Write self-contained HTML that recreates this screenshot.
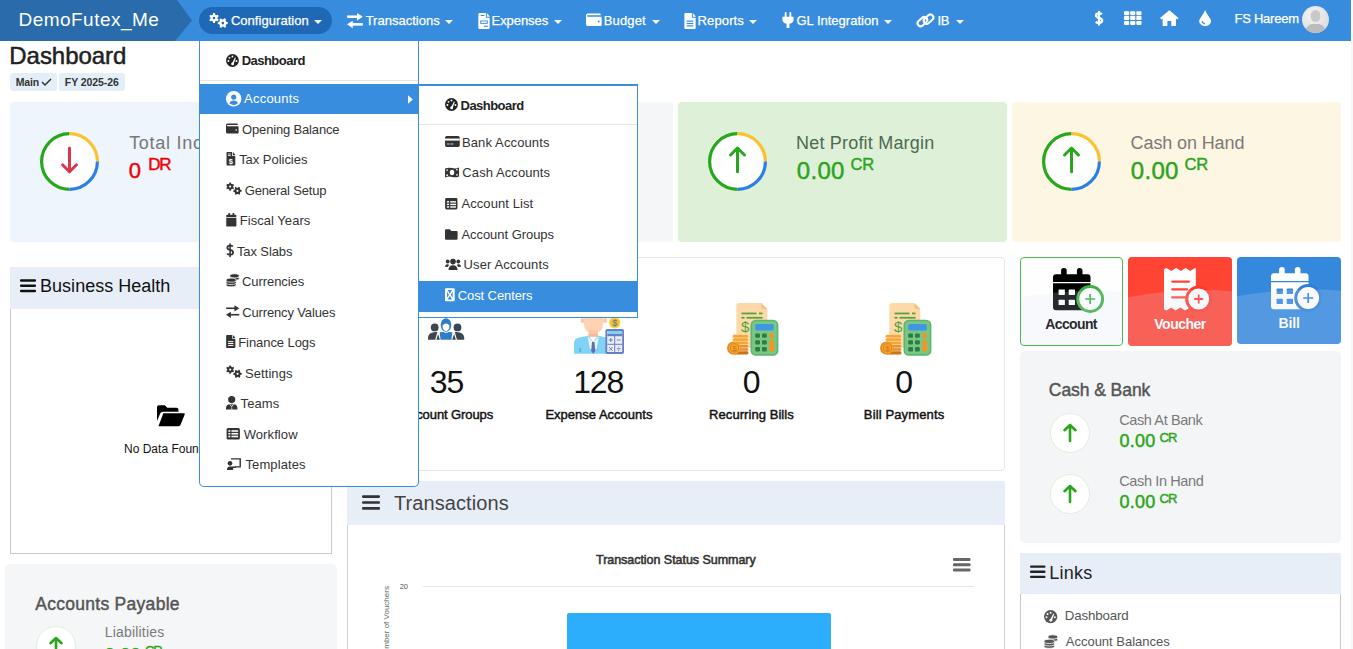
<!DOCTYPE html>
<html><head><meta charset="utf-8"><style>
*{box-sizing:border-box;margin:0;padding:0}
html,body{width:1353px;height:649px;overflow:hidden;background:#fff;font-family:"Liberation Sans",sans-serif;color:#222}
.a{position:absolute}
.t{position:absolute;white-space:nowrap;line-height:1;font-family:"Liberation Sans",sans-serif}
.ic{position:absolute;overflow:visible}
</style></head><body>
<div class="a" style="left:1351px;top:0;width:2px;height:649px;background:#f8f8f8"></div>
<div class="t" style="left:9.33px;top:43.68px;font-size:24px;color:#222;-webkit-text-stroke:0.5px #222;letter-spacing:-0.047px;">Dashboard</div>
<div class="a" style="left:10px;top:73px;width:47px;height:18px;background:#e3eef9;border-radius:3px"></div>
<div class="a" style="left:59px;top:73px;width:66px;height:18px;background:#e3eef9;border-radius:3px"></div>
<div class="t" style="left:15.82px;top:76.61px;font-size:10.5px;color:#333;font-weight:bold;letter-spacing:-0.192px;">Main</div>
<svg class="ic" style="left:41px;top:78px;" width="11" height="8" viewBox="0 0 11 8"><path d="M1,4 L4,7 L10,1" stroke="#333" stroke-width="1.5" fill="none"/></svg>
<div class="t" style="left:64.82px;top:76.61px;font-size:10.5px;color:#333;font-weight:bold;letter-spacing:-0.067px;">FY 2025-26</div>
<div class="a" style="left:10px;top:102px;width:329px;height:140px;background:#eef5fd;border-radius:4px"></div>
<svg class="ic" style="left:40px;top:132px;" width="59" height="59" viewBox="0 0 59 59"><circle cx="29.5" cy="29.5" r="27.9" fill="#fff"/><path d="M29.50,57.40 A27.9,27.9 0 0 1 29.50,1.60" stroke="#26a71c" stroke-width="3.2" fill="none"/><path d="M29.50,1.60 A27.9,27.9 0 0 1 57.40,29.50" stroke="#fbc22e" stroke-width="3.2" fill="none"/><path d="M57.40,29.50 A27.9,27.9 0 0 1 29.50,57.40" stroke="#2d7fe8" stroke-width="3.2" fill="none"/><path d="M29.5,16.0 V39.8 M22.5,32.8 L29.5,39.8 L36.5,32.8" stroke="#d9384a" stroke-width="3" stroke-linecap="round" stroke-linejoin="round" fill="none"/></svg>
<div class="t" style="left:129.14px;top:133.76px;font-size:18px;color:#777;letter-spacing:0.737px;">Total Income</div>
<div class="t" style="left:128.84px;top:159.88px;font-size:22px;color:#f00000;-webkit-text-stroke:0.45px #f00000;">0</div>
<div class="t" style="left:148.17px;top:155.81px;font-size:17px;color:#f00000;-webkit-text-stroke:0.45px #f00000;letter-spacing:-1.305px;">DR</div>
<div class="a" style="left:344px;top:102px;width:329px;height:140px;background:#f5f6f8;border-radius:4px"></div>
<svg class="ic" style="left:374px;top:132px;" width="59" height="59" viewBox="0 0 59 59"><circle cx="29.5" cy="29.5" r="27.9" fill="#fff"/><path d="M29.50,57.40 A27.9,27.9 0 0 1 29.50,1.60" stroke="#26a71c" stroke-width="3.2" fill="none"/><path d="M29.50,1.60 A27.9,27.9 0 0 1 57.40,29.50" stroke="#fbc22e" stroke-width="3.2" fill="none"/><path d="M57.40,29.50 A27.9,27.9 0 0 1 29.50,57.40" stroke="#2d7fe8" stroke-width="3.2" fill="none"/><path d="M29.5,16.0 V39.8 M22.5,32.8 L29.5,39.8 L36.5,32.8" stroke="#d9384a" stroke-width="3" stroke-linecap="round" stroke-linejoin="round" fill="none"/></svg>
<div class="t" style="left:463.14px;top:133.76px;font-size:18px;color:#777;letter-spacing:0.511px;">Total Expense</div>
<div class="t" style="left:462.85px;top:159.88px;font-size:22px;color:#f00000;-webkit-text-stroke:0.45px #f00000;">0</div>
<div class="t" style="left:482.17px;top:155.81px;font-size:17px;color:#f00000;-webkit-text-stroke:0.45px #f00000;letter-spacing:-1.305px;">DR</div>
<div class="a" style="left:678px;top:102px;width:329px;height:140px;background:#dff0d8;border-radius:4px"></div>
<svg class="ic" style="left:708px;top:132px;" width="59" height="59" viewBox="0 0 59 59"><circle cx="29.5" cy="29.5" r="27.9" fill="#fff"/><path d="M29.50,57.40 A27.9,27.9 0 0 1 29.50,1.60" stroke="#26a71c" stroke-width="3.2" fill="none"/><path d="M29.50,1.60 A27.9,27.9 0 0 1 57.40,29.50" stroke="#fbc22e" stroke-width="3.2" fill="none"/><path d="M57.40,29.50 A27.9,27.9 0 0 1 29.50,57.40" stroke="#2d7fe8" stroke-width="3.2" fill="none"/><path d="M29.5,39.8 V16.0 M22.5,23.0 L29.5,16.0 L36.5,23.0" stroke="#2aa51e" stroke-width="3" stroke-linecap="round" stroke-linejoin="round" fill="none"/></svg>
<div class="t" style="left:796.06px;top:133.76px;font-size:18px;color:#4d6a52;letter-spacing:0.194px;">Net Profit Margin</div>
<div class="t" style="left:796.76px;top:158.68px;font-size:24px;color:#2aa51a;-webkit-text-stroke:0.45px #2aa51a;letter-spacing:0.323px;">0.00</div>
<div class="t" style="left:850.40px;top:156.03px;font-size:16.5px;color:#2aa51a;-webkit-text-stroke:0.45px #2aa51a;letter-spacing:-0.043px;">CR</div>
<div class="a" style="left:1012px;top:102px;width:329px;height:140px;background:#fdf6e3;border-radius:4px"></div>
<svg class="ic" style="left:1042px;top:132px;" width="59" height="59" viewBox="0 0 59 59"><circle cx="29.5" cy="29.5" r="27.9" fill="#fff"/><path d="M29.50,57.40 A27.9,27.9 0 0 1 29.50,1.60" stroke="#26a71c" stroke-width="3.2" fill="none"/><path d="M29.50,1.60 A27.9,27.9 0 0 1 57.40,29.50" stroke="#fbc22e" stroke-width="3.2" fill="none"/><path d="M57.40,29.50 A27.9,27.9 0 0 1 29.50,57.40" stroke="#2d7fe8" stroke-width="3.2" fill="none"/><path d="M29.5,39.8 V16.0 M22.5,23.0 L29.5,16.0 L36.5,23.0" stroke="#2aa51e" stroke-width="3" stroke-linecap="round" stroke-linejoin="round" fill="none"/></svg>
<div class="t" style="left:1130.60px;top:133.76px;font-size:18px;color:#7a7a7a;letter-spacing:-0.114px;">Cash on Hand</div>
<div class="t" style="left:1130.77px;top:158.68px;font-size:24px;color:#2aa51a;-webkit-text-stroke:0.45px #2aa51a;letter-spacing:0.323px;">0.00</div>
<div class="t" style="left:1184.40px;top:156.03px;font-size:16.5px;color:#2aa51a;-webkit-text-stroke:0.45px #2aa51a;letter-spacing:-0.043px;">CR</div>
<div class="a" style="left:10px;top:267px;width:322px;height:42px;background:#e7eef8"></div>
<div class="a" style="left:10px;top:309px;width:322px;height:245px;border:1px solid #c8c8c8;border-top:none"></div>
<svg class="ic" style="left:20px;top:279px;" width="16" height="13.5" viewBox="0 0 16 13"><rect x="0" y="0" width="16" height="2.4" rx="1" fill="#111"/><rect x="0" y="5.3" width="16" height="2.4" rx="1" fill="#111"/><rect x="0" y="10.6" width="16" height="2.4" rx="1" fill="#111"/></svg>
<div class="t" style="left:40.06px;top:277.46px;font-size:18px;color:#111;letter-spacing:0.019px;">Business Health</div>
<svg class="ic" style="left:156.7px;top:405.4px;" width="28.3" height="22.2" viewBox="0 0 29 22"><path fill="#000" d="M0,2 Q0,0 2,0 H8 L10.5,2.5 H20 Q22,2.5 22,4.5 V6.5 H6 Q4.2,6.5 3.4,8.2 L0,16Z"/><path fill="#000" d="M6.5,8 H27.5 Q29,8 28.3,9.5 L24,20 Q23.3,21.5 21.5,21.5 H1.5Z"/></svg>
<div class="t" style="left:124.04px;top:442.64px;font-size:12px;color:#111;">No Data Found</div>
<div class="a" style="left:5px;top:564px;width:332px;height:120px;background:#f5f6f8;border-radius:5px"></div>
<div class="t" style="left:35.23px;top:596.19px;font-size:17.5px;color:#555;-webkit-text-stroke:0.45px #555;letter-spacing:0.283px;">Accounts Payable</div>
<svg class="ic" style="left:35.5px;top:626px;" width="40" height="40" viewBox="0 0 40 40"><circle cx="20.0" cy="20.0" r="19.5" fill="#fff" stroke="#e0efdb" stroke-width="1"/><path d="M20.0,28.0 V12.0 M14.5,17.2 L20.0,12.0 L25.5,17.2" stroke="#2aa51e" stroke-width="2.6" stroke-linecap="round" stroke-linejoin="round" fill="none"/></svg>
<div class="t" style="left:104.68px;top:625.45px;font-size:14px;color:#7a7a7a;letter-spacing:0.190px;">Liabilities</div>
<div class="t" style="left:104.80px;top:645.76px;font-size:18px;color:#2aa515;-webkit-text-stroke:0.45px #2aa515;letter-spacing:0.230px;">0.00</div>
<div class="t" style="left:144.88px;top:644.00px;font-size:13px;color:#2aa515;-webkit-text-stroke:0.45px #2aa515;letter-spacing:-0.935px;">CR</div>
<div class="a" style="left:348px;top:257px;width:657px;height:214px;border:1px solid #e6e6e6;border-radius:4px"></div>
<div class="t" style="left:429.72px;top:366.11px;font-size:32px;color:#111;letter-spacing:-0.960px;">35</div>
<div class="t" style="left:401.23px;top:407.80px;font-size:13px;color:#111;-webkit-text-stroke:0.45px #111;letter-spacing:-0.093px;">Account Groups</div>
<div class="t" style="left:573.20px;top:366.11px;font-size:32px;color:#111;letter-spacing:-1.200px;">128</div>
<div class="t" style="left:545.38px;top:407.80px;font-size:13px;color:#111;-webkit-text-stroke:0.45px #111;letter-spacing:0.004px;">Expense Accounts</div>
<div class="t" style="left:742.77px;top:366.11px;font-size:32px;color:#111;">0</div>
<div class="t" style="left:709.09px;top:407.80px;font-size:13px;color:#111;-webkit-text-stroke:0.45px #111;letter-spacing:0.061px;">Recurring Bills</div>
<div class="t" style="left:895.37px;top:366.11px;font-size:32px;color:#111;">0</div>
<div class="t" style="left:863.83px;top:407.80px;font-size:13px;color:#111;-webkit-text-stroke:0.45px #111;letter-spacing:0.130px;">Bill Payments</div>
<svg class="ic" style="left:428px;top:318px;" width="36.2" height="22" viewBox="0 0 36.2 22"><circle cx="6.7" cy="9.4" r="3.9" fill="#3b4650"/><circle cx="29.5" cy="9.4" r="3.9" fill="#3b4650"/><path fill="#3b4650" d="M0,21.7 V19.5 Q0.5,14.2 7.5,13.9 L9.4,13.9 L7.2,21.7Z"/><path fill="#3b4650" d="M36.2,21.7 V19.5 Q35.7,14.2 28.7,13.9 L26.8,13.9 L29,21.7Z"/><path fill="#3b4650" d="M8.3,21.7 L10.1,16 L11.9,21.7Z"/><path fill="#3b4650" d="M27.9,21.7 L26.1,16 L24.3,21.7Z"/><ellipse cx="18" cy="7" rx="5.35" ry="6.65" fill="#2f7cc9"/><path fill="#fff" d="M14.5,7.5 Q16,5.6 18,5.6 Q20,5.6 21.5,7.5 Q21.5,12 18,13.3 Q14.5,12 14.5,7.5Z"/><path fill="#2f7cc9" d="M11.6,14.3 L15.5,13.9 Q18,15.6 20.5,13.9 L24.4,14.3 L23.4,21.7 H12.6Z"/></svg>
<svg class="ic" style="left:572px;top:302px;" width="52" height="52" viewBox="0 0 52 52"><ellipse cx="10.5" cy="18.5" rx="2" ry="2.6" fill="#fdc9a4"/><ellipse cx="33" cy="18.5" rx="2" ry="2.6" fill="#fdc9a4"/><path fill="#fdd3b3" d="M12,6 H31 V22 Q31,31 21.5,31 Q12,31 12,22Z"/><rect x="16.6" y="28" width="9.2" height="7" fill="#fdc9a4"/><path fill="#f8b48e" d="M16.6,31 Q21.2,34 25.8,31 V33 Q21.2,35.5 16.6,33Z"/><path fill="#80d2f6" d="M2,51.7 V41 Q2,36 8,35.5 L16.6,33.5 L21.2,40 L25.8,33.5 L34,35.5 V51.7Z"/><path fill="#eef3f7" d="M15.5,34 L21.2,40.5 L27,34 L24.5,47 H18Z"/><path fill="#5a6eb0" d="M20,40 H22.5 L23.2,49 L21.2,51.7 L19.2,49Z"/><rect x="7.5" y="46" width="1.3" height="4" fill="#3bb0e0"/><circle cx="42.7" cy="20.7" r="5.7" fill="#f9d13c"/><circle cx="42.7" cy="20.7" r="4.3" fill="#f6c21e"/><text x="42.7" y="24" font-size="9" text-anchor="middle" fill="#5a6eb0" font-family="Liberation Sans">$</text><rect x="34.3" y="28" width="16.8" height="23" rx="0.8" fill="#e9edf6" stroke="#6b7ebf" stroke-width="1.8"/><rect x="35.3" y="29" width="14.8" height="3" fill="#7fd3f7"/><rect x="35.3" y="32" width="14.8" height="2.2" fill="#6b7ebf"/><rect x="42.2" y="34" width="1" height="16" fill="#6b7ebf"/><rect x="35.3" y="41.8" width="14.8" height="1" fill="#6b7ebf"/><path d="M36.8,38 H40.8 M38.8,36 V40 M44.8,38 H48.6 M37,45 L40.6,48.6 M40.6,45 L37,48.6 M44.8,46.8 H48.6" stroke="#6b7ebf" stroke-width="1"/><circle cx="46.7" cy="45" r="0.55" fill="#6b7ebf"/><circle cx="46.7" cy="48.6" r="0.55" fill="#6b7ebf"/></svg>
<svg class="ic" style="left:726px;top:303px;" width="52" height="52" viewBox="0 0 52 52"><path fill="#fdd9aa" d="M13.3,0 H35.3 L41.3,6 V42 Q41.3,45 38.3,45 H13.3 Q10.3,45 10.3,42 V3 Q10.3,0 13.3,0Z"/><path fill="#f8c07a" d="M35.3,0 L41.3,6 H37.3 Q35.3,6 35.3,4Z"/><rect x="15.5" y="9.6" width="15" height="1.7" fill="#4fa437"/><rect x="33" y="9.6" width="3.5" height="1.7" fill="#4fa437"/><rect x="15.5" y="13.9" width="3" height="1.7" fill="#4fa437"/><rect x="20.5" y="13.9" width="16" height="1.7" fill="#4fa437"/><text x="19.2" y="29" font-size="15" text-anchor="middle" fill="#4fa437" font-family="Liberation Sans">$</text><rect x="6.4" y="31.6" width="16.3" height="3.6" rx="1.8" fill="#f7a530" stroke="#fff" stroke-width="0.4"/><rect x="6.4" y="34.9" width="16.3" height="3.6" rx="1.8" fill="#f7a530" stroke="#fff" stroke-width="0.4"/><rect x="6.4" y="38.2" width="16.3" height="3.6" rx="1.8" fill="#f7a530" stroke="#fff" stroke-width="0.4"/><rect x="6.4" y="41.5" width="16.3" height="3.6" rx="1.8" fill="#e8902a" stroke="#fff" stroke-width="0.4"/><rect x="6.4" y="44.8" width="16.3" height="3.6" rx="1.8" fill="#e8902a" stroke="#fff" stroke-width="0.4"/><rect x="6.4" y="48.1" width="16.3" height="3.6" rx="1.8" fill="#c9741a" stroke="#fff" stroke-width="0.4"/><circle cx="7.6" cy="45" r="6.6" fill="#e58b22"/><circle cx="8.6" cy="44.8" r="5.8" fill="#f6a52e"/><circle cx="8.6" cy="44.8" r="4.1" fill="none" stroke="#d77f1a" stroke-width="0.9"/><text x="8.6" y="47.8" font-size="7.5" text-anchor="middle" fill="#c9741a" font-family="Liberation Sans">$</text><rect x="25.3" y="17.5" width="26.3" height="34.4" rx="4.5" fill="#78c786" stroke="#5cb66b" stroke-width="1.6"/><rect x="29.2" y="21" width="18.6" height="6.5" rx="1.5" fill="#3f96e2"/><rect x="29.2" y="30.4" width="4.8" height="4.4" rx="1" fill="#2e7c3f"/><rect x="29.2" y="37.2" width="4.8" height="4.4" rx="1" fill="#2e7c3f"/><rect x="29.2" y="44" width="4.8" height="4.4" rx="1" fill="#2e7c3f"/><rect x="36" y="30.4" width="4.8" height="4.4" rx="1" fill="#2e7c3f"/><rect x="36" y="37.2" width="4.8" height="4.4" rx="1" fill="#2e7c3f"/><rect x="36" y="44" width="4.8" height="4.4" rx="1" fill="#2e7c3f"/><rect x="43.4" y="30.4" width="4.6" height="4.4" rx="1" fill="#f7941d"/><rect x="43.4" y="37.2" width="4.6" height="11.2" rx="1" fill="#f7941d"/></svg>
<svg class="ic" style="left:878.6px;top:303px;" width="52" height="52" viewBox="0 0 52 52"><path fill="#fdd9aa" d="M13.3,0 H35.3 L41.3,6 V42 Q41.3,45 38.3,45 H13.3 Q10.3,45 10.3,42 V3 Q10.3,0 13.3,0Z"/><path fill="#f8c07a" d="M35.3,0 L41.3,6 H37.3 Q35.3,6 35.3,4Z"/><rect x="15.5" y="9.6" width="15" height="1.7" fill="#4fa437"/><rect x="33" y="9.6" width="3.5" height="1.7" fill="#4fa437"/><rect x="15.5" y="13.9" width="3" height="1.7" fill="#4fa437"/><rect x="20.5" y="13.9" width="16" height="1.7" fill="#4fa437"/><text x="19.2" y="29" font-size="15" text-anchor="middle" fill="#4fa437" font-family="Liberation Sans">$</text><rect x="6.4" y="31.6" width="16.3" height="3.6" rx="1.8" fill="#f7a530" stroke="#fff" stroke-width="0.4"/><rect x="6.4" y="34.9" width="16.3" height="3.6" rx="1.8" fill="#f7a530" stroke="#fff" stroke-width="0.4"/><rect x="6.4" y="38.2" width="16.3" height="3.6" rx="1.8" fill="#f7a530" stroke="#fff" stroke-width="0.4"/><rect x="6.4" y="41.5" width="16.3" height="3.6" rx="1.8" fill="#e8902a" stroke="#fff" stroke-width="0.4"/><rect x="6.4" y="44.8" width="16.3" height="3.6" rx="1.8" fill="#e8902a" stroke="#fff" stroke-width="0.4"/><rect x="6.4" y="48.1" width="16.3" height="3.6" rx="1.8" fill="#c9741a" stroke="#fff" stroke-width="0.4"/><circle cx="7.6" cy="45" r="6.6" fill="#e58b22"/><circle cx="8.6" cy="44.8" r="5.8" fill="#f6a52e"/><circle cx="8.6" cy="44.8" r="4.1" fill="none" stroke="#d77f1a" stroke-width="0.9"/><text x="8.6" y="47.8" font-size="7.5" text-anchor="middle" fill="#c9741a" font-family="Liberation Sans">$</text><rect x="25.3" y="17.5" width="26.3" height="34.4" rx="4.5" fill="#78c786" stroke="#5cb66b" stroke-width="1.6"/><rect x="29.2" y="21" width="18.6" height="6.5" rx="1.5" fill="#3f96e2"/><rect x="29.2" y="30.4" width="4.8" height="4.4" rx="1" fill="#2e7c3f"/><rect x="29.2" y="37.2" width="4.8" height="4.4" rx="1" fill="#2e7c3f"/><rect x="29.2" y="44" width="4.8" height="4.4" rx="1" fill="#2e7c3f"/><rect x="36" y="30.4" width="4.8" height="4.4" rx="1" fill="#2e7c3f"/><rect x="36" y="37.2" width="4.8" height="4.4" rx="1" fill="#2e7c3f"/><rect x="36" y="44" width="4.8" height="4.4" rx="1" fill="#2e7c3f"/><rect x="43.4" y="30.4" width="4.6" height="4.4" rx="1" fill="#f7941d"/><rect x="43.4" y="37.2" width="4.6" height="11.2" rx="1" fill="#f7941d"/></svg>
<div class="a" style="left:347px;top:481px;width:658px;height:44px;background:#e7eef8"></div>
<div class="a" style="left:347px;top:525px;width:658px;height:140px;border:1px solid #d0d0d0;border-top:none"></div>
<svg class="ic" style="left:361.5px;top:495px;" width="18" height="15" viewBox="0 0 16 13"><rect x="0" y="0" width="16" height="2.4" rx="1" fill="#333"/><rect x="0" y="5.3" width="16" height="2.4" rx="1" fill="#333"/><rect x="0" y="10.6" width="16" height="2.4" rx="1" fill="#333"/></svg>
<div class="t" style="left:394.00px;top:492.97px;font-size:20px;color:#444;letter-spacing:0.082px;">Transactions</div>
<div class="t" style="left:596.02px;top:554.42px;font-size:12.5px;color:#333;-webkit-text-stroke:0.55px #333;letter-spacing:-0.040px;">Transaction Status Summary</div>
<svg class="ic" style="left:952.7px;top:558px;" width="17.5" height="13.5" viewBox="0 0 17.5 13.5"><rect y="0" width="17.5" height="2.9" rx="1" fill="#666"/><rect y="5.3" width="17.5" height="2.9" rx="1" fill="#666"/><rect y="10.6" width="17.5" height="2.9" rx="1" fill="#666"/></svg>
<div class="a" style="left:423px;top:585.5px;width:551px;height:1px;background:#e6e6e6"></div>
<div class="t" style="left:399.82px;top:583.45px;font-size:7.5px;color:#555;letter-spacing:-0.287px;">20</div>
<div class="t" style="left:382.6px;top:659.2px;font-size:8px;color:#666;transform:rotate(-90deg);transform-origin:0 0;">Number of Vouchers</div>
<div class="a" style="left:567px;top:613px;width:264px;height:60px;background:#2caefc;border-radius:2px 2px 0 0"></div>
<div class="a" style="left:1020px;top:257px;width:103px;height:89px;border:1px solid #4cbb4c;border-radius:4px;background:#fefefe"></div>
<div class="a" style="left:1128px;top:257px;width:104px;height:89px;border-radius:4px;background:#ff4433"></div>
<div class="a" style="left:1237px;top:257px;width:104px;height:87px;border-radius:4px;background:#3589dd"></div>
<svg class="ic" style="left:1052.6px;top:267.7px;" width="51.2" height="45" viewBox="0 0 51.2 45"><rect x="8.1" y="0" width="5.6" height="8" rx="2.8" fill="#000"/><rect x="23.9" y="0" width="5.6" height="8" rx="2.8" fill="#000"/><path fill="#000" d="M3,6.3 H34.5 Q37.5,6.3 37.5,9.3 V14 H0 V9.3 Q0,6.3 3,6.3Z"/><path fill="#000" d="M0,15.3 H37.5 V39.3 Q37.5,42.3 34.5,42.3 H3 Q0,42.3 0,39.3Z"/><rect x="5.6" y="21.6" width="6.3" height="5.3" rx="0.6" fill="#fefefe"/><rect x="5.6" y="31.7" width="6.3" height="5.3" rx="0.6" fill="#fefefe"/><rect x="15.7" y="21.6" width="6.3" height="5.3" rx="0.6" fill="#fefefe"/><rect x="15.7" y="31.7" width="6.3" height="5.3" rx="0.6" fill="#fefefe"/><circle cx="37.2" cy="31" r="12.4" fill="#fff" stroke="#3cb043" stroke-width="3"/><path d="M37.2,26 V36 M32.2,31 H42.2" stroke="#3cb043" stroke-width="1.7"/></svg>
<div class="t" style="left:1045.25px;top:316.95px;font-size:14px;color:#000;font-weight:bold;letter-spacing:-0.623px;">Account</div>
<svg class="ic" style="left:1164px;top:267.7px;" width="49" height="46" viewBox="0 0 49 46"><path fill="#fff" d="M0,1.2 L2.4,0 L7.3,2.9 L12.2,0 L16.9,2.9 L21.6,0 L26.3,2.9 L31,0 L31.8,0.5 V41.5 L30,42.5 L26,39.5 L21.2,42.5 L16.3,39.5 L11.4,42.5 L7.3,39.5 L2.4,42.5 L0,41.3Z"/><path d="M8.3,13.6 H24.9 M8.3,21.3 H23 M8.3,29.4 H21" stroke="#ff4433" stroke-width="2.3" stroke-linecap="round"/><circle cx="34.7" cy="31" r="12" fill="#fff" stroke="#ff3b2f" stroke-width="3"/><path d="M34.7,26.5 V35.5 M30.2,31 H39.2" stroke="#ff3b2f" stroke-width="1.8"/></svg>
<div class="t" style="left:1154.33px;top:316.85px;font-size:14px;color:#fff;font-weight:bold;letter-spacing:-0.523px;">Voucher</div>
<svg class="ic" style="left:1270.7px;top:266.9px;" width="51.2" height="45" viewBox="0 0 51.2 45"><rect x="8.1" y="0" width="5.6" height="8" rx="2.8" fill="#fff"/><rect x="23.9" y="0" width="5.6" height="8" rx="2.8" fill="#fff"/><path fill="#fff" d="M3,6.3 H34.5 Q37.5,6.3 37.5,9.3 V14 H0 V9.3 Q0,6.3 3,6.3Z"/><path fill="#fff" d="M0,15.3 H37.5 V39.3 Q37.5,42.3 34.5,42.3 H3 Q0,42.3 0,39.3Z"/><rect x="5.6" y="21.6" width="6.3" height="5.3" rx="0.6" fill="#3589dd"/><rect x="5.6" y="31.7" width="6.3" height="5.3" rx="0.6" fill="#3589dd"/><rect x="15.7" y="21.6" width="6.3" height="5.3" rx="0.6" fill="#3589dd"/><rect x="15.7" y="31.7" width="6.3" height="5.3" rx="0.6" fill="#3589dd"/><circle cx="37.2" cy="31" r="12.4" fill="#fff" stroke="#2f7fd8" stroke-width="3"/><path d="M37.2,26 V36 M32.2,31 H42.2" stroke="#2f7fd8" stroke-width="1.7"/></svg>
<div class="t" style="left:1278.39px;top:315.65px;font-size:14px;color:#fff;font-weight:bold;letter-spacing:-0.083px;">Bill</div>
<div class="a" style="left:1021px;top:258px;width:101px;height:87px;border-radius:3px;overflow:hidden"><svg class="ic" style="left:0;top:0" width="101" height="87" viewBox="0 0 104 89" preserveAspectRatio="none"><path d="M0,40.2 Q60,30 104,34.5 V89 H0Z" fill="rgba(214,225,243,0.18)"/></svg></div>
<div class="a" style="left:1128px;top:257px;width:104px;height:89px;border-radius:4px;overflow:hidden"><svg class="ic" style="left:0;top:0" width="104" height="89" viewBox="0 0 104 89" preserveAspectRatio="none"><path d="M0,40.2 Q60,30 104,34.5 V89 H0Z" fill="rgba(214,225,243,0.19)"/></svg></div>
<div class="a" style="left:1237px;top:257px;width:104px;height:87px;border-radius:4px;overflow:hidden"><svg class="ic" style="left:0;top:0" width="104" height="87" viewBox="0 0 104 89" preserveAspectRatio="none"><path d="M0,40.2 Q60,30 104,34.5 V89 H0Z" fill="rgba(214,225,243,0.19)"/></svg></div>
<div class="a" style="left:1020px;top:351px;width:321px;height:192px;background:#f4f5f7;border-radius:5px"></div>
<div class="t" style="left:1048.85px;top:381.69px;font-size:17.5px;color:#555;-webkit-text-stroke:0.45px #555;letter-spacing:-0.069px;">Cash &amp; Bank</div>
<svg class="ic" style="left:1050px;top:413px;" width="40" height="40" viewBox="0 0 40 40"><circle cx="20.0" cy="20.0" r="19.5" fill="#fff" stroke="#e0efdb" stroke-width="1"/><path d="M20.0,28.0 V12.0 M14.5,17.2 L20.0,12.0 L25.5,17.2" stroke="#2aa51e" stroke-width="2.6" stroke-linecap="round" stroke-linejoin="round" fill="none"/></svg>
<svg class="ic" style="left:1050px;top:474px;" width="40" height="40" viewBox="0 0 40 40"><circle cx="20.0" cy="20.0" r="19.5" fill="#fff" stroke="#e0efdb" stroke-width="1"/><path d="M20.0,28.0 V12.0 M14.5,17.2 L20.0,12.0 L25.5,17.2" stroke="#2aa51e" stroke-width="2.6" stroke-linecap="round" stroke-linejoin="round" fill="none"/></svg>
<div class="t" style="left:1119.28px;top:413.33px;font-size:14.5px;color:#7a7a7a;letter-spacing:-0.395px;">Cash At Bank</div>
<div class="t" style="left:1119.51px;top:432.46px;font-size:18px;color:#2aa515;-webkit-text-stroke:0.45px #2aa515;letter-spacing:0.230px;">0.00</div>
<div class="t" style="left:1159.58px;top:431.30px;font-size:13px;color:#2aa515;-webkit-text-stroke:0.45px #2aa515;letter-spacing:-0.935px;">CR</div>
<div class="t" style="left:1119.28px;top:474.33px;font-size:14.5px;color:#7a7a7a;letter-spacing:-0.382px;">Cash In Hand</div>
<div class="t" style="left:1119.51px;top:493.46px;font-size:18px;color:#2aa515;-webkit-text-stroke:0.45px #2aa515;letter-spacing:0.230px;">0.00</div>
<div class="t" style="left:1159.58px;top:492.30px;font-size:13px;color:#2aa515;-webkit-text-stroke:0.45px #2aa515;letter-spacing:-0.935px;">CR</div>
<div class="a" style="left:1020px;top:553px;width:321px;height:41px;background:#e7eef8"></div>
<div class="a" style="left:1020px;top:594px;width:321px;height:80px;border:1px solid #c8c8c8;border-top:none"></div>
<svg class="ic" style="left:1029.5px;top:565.3px;" width="15.5" height="13.5" viewBox="0 0 16 13"><rect x="0" y="0" width="16" height="2.4" rx="1" fill="#222"/><rect x="0" y="5.3" width="16" height="2.4" rx="1" fill="#222"/><rect x="0" y="10.6" width="16" height="2.4" rx="1" fill="#222"/></svg>
<div class="t" style="left:1049.16px;top:563.56px;font-size:18px;color:#222;letter-spacing:0.260px;">Links</div>
<svg class="ic" style="left:1043.9px;top:609.6px;" width="13.3" height="13.3" viewBox="0 0 16 16"><circle cx="8" cy="8" r="8" fill="#555"/><circle cx="8" cy="3.2" r="1.2" fill="#fff"/><circle cx="4.3" cy="4.8" r="1.2" fill="#fff"/><circle cx="3" cy="8.6" r="1.2" fill="#fff"/><circle cx="13" cy="8.6" r="1.2" fill="#fff"/><path d="M7,12.5 L11.2,4.2 L12.2,4.7 L9.3,13.2Z" fill="#fff"/><circle cx="8.2" cy="12.4" r="1.7" fill="#fff"/></svg>
<div class="t" style="left:1064.74px;top:608.74px;font-size:13.3px;color:#555;letter-spacing:-0.139px;">Dashboard</div>
<svg class="ic" style="left:1043.5px;top:634.5px;" width="14" height="14" viewBox="0 0 14 14"><ellipse cx="8.8" cy="4.4" rx="4.9" ry="2.1" fill="#555" stroke="#fff" stroke-width="0.8"/><ellipse cx="8.8" cy="1.9" rx="4.9" ry="2.1" fill="#555" stroke="#fff" stroke-width="0.8"/><ellipse cx="5.3" cy="11.2" rx="5.3" ry="2.1" fill="#555" stroke="#fff" stroke-width="0.8"/><ellipse cx="5.3" cy="8.8" rx="5.3" ry="2.1" fill="#555" stroke="#fff" stroke-width="0.8"/><ellipse cx="5.3" cy="6.4" rx="5.3" ry="2.1" fill="#555" stroke="#fff" stroke-width="0.8"/></svg>
<div class="t" style="left:1065.80px;top:635.00px;font-size:13px;color:#555;letter-spacing:-0.014px;">Account Balances</div>
<div class="a" style="left:0;top:0;width:1351px;height:41px;background:#388cdd"></div>
<svg class="ic" style="left:0;top:0" width="193" height="41"><polygon points="0,0 177,0 192,20.5 175,41 0,41" fill="#2a6bac"/></svg>
<div class="t" style="left:18.48px;top:10.22px;font-size:19px;color:#fff;letter-spacing:0.472px;">DemoFutex_Me</div>
<div class="a" style="left:199px;top:7px;width:133px;height:27px;border-radius:13.5px;background:#1f68b6"></div>
<svg class="ic" style="left:208.8px;top:13px;" width="19.1" height="15.2" viewBox="0 0 19.1 15.2"><path fill-rule="evenodd" fill="#fff" d="M3.86,1.48 L4.11,0.08 L5.89,0.08 L6.14,1.48 L7.48,2.25 L8.82,1.77 L9.70,3.31 L8.62,4.23 L8.62,5.77 L9.70,6.69 L8.82,8.23 L7.48,7.75 L6.14,8.52 L5.89,9.92 L4.11,9.92 L3.86,8.52 L2.52,7.75 L1.18,8.23 L0.30,6.69 L1.38,5.77 L1.38,4.23 L0.30,3.31 L1.18,1.77 L2.52,2.25ZM6.30,5.00 A1.3,1.3 0 1,0 3.70,5.00 A1.3,1.3 0 1,0 6.30,5.00ZM14.50,6.37 L15.41,5.26 L17.00,6.13 L16.56,7.49 L17.39,8.84 L18.80,9.08 L18.84,10.88 L17.44,11.19 L16.68,12.58 L17.18,13.92 L15.64,14.86 L14.68,13.80 L13.10,13.83 L12.19,14.94 L10.60,14.07 L11.04,12.71 L10.21,11.36 L8.80,11.12 L8.76,9.32 L10.16,9.01 L10.92,7.62 L10.42,6.28 L11.96,5.34 L12.92,6.40ZM15.10,10.10 A1.3,1.3 0 1,0 12.50,10.10 A1.3,1.3 0 1,0 15.10,10.10Z"/></svg>
<div class="t" style="left:230.88px;top:14.00px;font-size:13px;color:#fff;-webkit-text-stroke:0.25px #fff;letter-spacing:0.047px;">Configuration</div>
<svg class="ic" style="left:314px;top:20px;" width="8" height="4" viewBox="0 0 8 4"><path d="M0,0 H8 L4,4Z" fill="#fff"/></svg>
<svg class="ic" style="left:346.8px;top:12.8px;" width="15.9" height="15.2" viewBox="0 0 16 15.2"><rect x="0.2" y="2.40" width="10.6" height="2.6" fill="#fff"/><path fill="#fff" d="M10.1,0 L15.9,3.7 L10.1,7.5Z"/><path fill="#fff" d="M5.8,7.7 L0,11.4 L5.8,15.2Z"/><rect x="5.2" y="10.10" width="10.7" height="2.6" fill="#fff"/></svg>
<div class="t" style="left:365.67px;top:14.00px;font-size:13px;color:#fff;-webkit-text-stroke:0.25px #fff;letter-spacing:0.009px;">Transactions</div>
<svg class="ic" style="left:445px;top:20px;" width="8" height="4" viewBox="0 0 8 4"><path d="M0,0 H8 L4,4Z" fill="#fff"/></svg>
<svg class="ic" style="left:478px;top:12.5px;" width="12" height="16" viewBox="0 0 12 17"><path fill="#fff" d="M1,0 H8 V5 H12 V16 Q12,17 11,17 H1 Q0,17 0,16 V1 Q0,0 1,0Z M9,0 L12,3.5 V4 H9Z"/><rect x="2.5" y="2" width="4" height="1.2" fill="#388cdd"/><rect x="2" y="8" width="8" height="3.5" fill="#388cdd"/><rect x="3" y="9" width="6" height="1.5" fill="#fff"/><rect x="6" y="13.5" width="4" height="1.2" fill="#388cdd"/></svg>
<div class="t" style="left:491.58px;top:14.00px;font-size:13px;color:#fff;-webkit-text-stroke:0.25px #fff;letter-spacing:-0.075px;">Expenses</div>
<svg class="ic" style="left:553.8px;top:20px;" width="8" height="4" viewBox="0 0 8 4"><path d="M0,0 H8 L4,4Z" fill="#fff"/></svg>
<svg class="ic" style="left:586px;top:13px;" width="15.7" height="13.5" viewBox="0 0 16 13"><path fill="#fff" d="M2,0 H14 Q15,0 15,1 V2 H2 Q1,2 1,2.8 Q1,3.5 2,3.5 H15 Q16,3.5 16,4.5 V12 Q16,13 15,13 H2 Q0,13 0,11 V2 Q0,0 2,0Z"/><circle cx="13" cy="8.3" r="1" fill="#388cdd"/></svg>
<div class="t" style="left:603.79px;top:14.00px;font-size:13px;color:#fff;-webkit-text-stroke:0.25px #fff;letter-spacing:0.122px;">Budget</div>
<svg class="ic" style="left:651.6px;top:20px;" width="8" height="4" viewBox="0 0 8 4"><path d="M0,0 H8 L4,4Z" fill="#fff"/></svg>
<svg class="ic" style="left:683.5px;top:12.5px;" width="12" height="16" viewBox="0 0 12 17"><path fill="#fff" d="M1,0 H8 V5 H12 V16 Q12,17 11,17 H1 Q0,17 0,16 V1 Q0,0 1,0Z M9,0 L12,3.5 V4 H9Z"/><rect x="2.5" y="8" width="7" height="1.3" fill="#388cdd"/><rect x="2.5" y="10.5" width="7" height="1.3" fill="#388cdd"/><rect x="2.5" y="13" width="7" height="1.3" fill="#388cdd"/></svg>
<div class="t" style="left:697.59px;top:14.00px;font-size:13px;color:#fff;-webkit-text-stroke:0.25px #fff;letter-spacing:0.124px;">Reports</div>
<svg class="ic" style="left:749.4px;top:20px;" width="8" height="4" viewBox="0 0 8 4"><path d="M0,0 H8 L4,4Z" fill="#fff"/></svg>
<svg class="ic" style="left:781.5px;top:12px;" width="12" height="16" viewBox="0 0 12 17"><rect x="2.5" y="0" width="2" height="6" rx="1" fill="#fff"/><rect x="7.5" y="0" width="2" height="6" rx="1" fill="#fff"/><path fill="#fff" d="M0,5 H12 V7.5 Q12,12 7.5,12.5 V17 H4.5 V12.5 Q0,12 0,7.5Z"/></svg>
<div class="t" style="left:796.38px;top:14.00px;font-size:13px;color:#fff;-webkit-text-stroke:0.25px #fff;letter-spacing:0.011px;">GL Integration</div>
<svg class="ic" style="left:883.7px;top:20px;" width="8" height="4" viewBox="0 0 8 4"><path d="M0,0 H8 L4,4Z" fill="#fff"/></svg>
<svg class="ic" style="left:916px;top:12.9px;" width="19" height="14.7" viewBox="0 0 19 14.7"><g fill="none" stroke="#fff" stroke-width="2.1"><rect x="-5.4" y="-3" width="10.8" height="6" rx="3" transform="translate(6.4,8.6) rotate(-42)"/><rect x="-5.4" y="-3" width="10.8" height="6" rx="3" transform="translate(12.6,6.1) rotate(-42)"/></g></svg>
<div class="t" style="left:937.46px;top:14.00px;font-size:13px;color:#fff;-webkit-text-stroke:0.25px #fff;letter-spacing:-0.215px;">IB</div>
<svg class="ic" style="left:955.5px;top:20px;" width="8" height="4" viewBox="0 0 8 4"><path d="M0,0 H8 L4,4Z" fill="#fff"/></svg>
<svg class="ic" style="left:1093.7px;top:11.1px;" width="9.9" height="14.5" viewBox="0 0 9.5 16"><path fill="none" stroke="#fff" stroke-width="2.5" d="M8,3.6 Q7.2,2.6 4.7,2.6 Q1.5,2.6 1.5,5 Q1.5,6.8 4.7,7.6 Q8.3,8.4 8.3,10.6 Q8.3,13.1 4.9,13.1 Q2.3,13.1 1.2,12"/><rect x="3.62" y="0" width="2.25" height="16" fill="#fff"/></svg>
<svg class="ic" style="left:1124px;top:11.1px;" width="17.5" height="14.1" viewBox="0 0 17.6 13.8"><rect x="0.0" y="0.0" width="5.2" height="4" rx="0.8" fill="#fff"/><rect x="0.0" y="4.9" width="5.2" height="4" rx="0.8" fill="#fff"/><rect x="0.0" y="9.8" width="5.2" height="4" rx="0.8" fill="#fff"/><rect x="6.2" y="0.0" width="5.2" height="4" rx="0.8" fill="#fff"/><rect x="6.2" y="4.9" width="5.2" height="4" rx="0.8" fill="#fff"/><rect x="6.2" y="9.8" width="5.2" height="4" rx="0.8" fill="#fff"/><rect x="12.4" y="0.0" width="5.2" height="4" rx="0.8" fill="#fff"/><rect x="12.4" y="4.9" width="5.2" height="4" rx="0.8" fill="#fff"/><rect x="12.4" y="9.8" width="5.2" height="4" rx="0.8" fill="#fff"/></svg>
<svg class="ic" style="left:1159.7px;top:10px;" width="18.6" height="16.2" viewBox="0 0 19 16"><path fill="#fff" d="M9.5,0 L19,8 L17.5,9.5 L16.3,8.5 V16 H11.5 V11 H7.5 V16 H2.7 V8.5 L1.5,9.5 L0,8Z"/></svg>
<svg class="ic" style="left:1199px;top:9.7px;" width="12.2" height="16.1" viewBox="0 0 12 16.2"><path fill="#fff" d="M6,0 Q7,3 10,7 Q12,9.5 12,11 A6,5.2 0 0 1 0,11 Q0,9.5 2,7 Q5,3 6,0Z"/><path fill="none" stroke="#388cdd" stroke-width="1.1" d="M3,11 Q3.3,13.5 6,14"/></svg>
<div class="t" style="left:1234.49px;top:12.20px;font-size:13px;color:#fff;-webkit-text-stroke:0.25px #fff;letter-spacing:-0.245px;">FS Hareem</div>
<div class="a" style="left:1302px;top:6px;width:27px;height:27px;border-radius:50%;background:radial-gradient(circle at 40% 35%,#f4f4f4,#d6d6d6);overflow:hidden"><svg class="ic" style="left:0;top:0" width="27" height="27" viewBox="0 0 27 27"><ellipse cx="13.5" cy="10" rx="5" ry="6" fill="#c8c8c8"/><path d="M3,27 Q4,19 10,18 L17,18 Q23,19 24,27Z" fill="#bcbcbc"/></svg></div>
<div class="a" style="left:199px;top:41px;width:220px;height:446px;background:#fff;border:1px solid #3a8de0;border-top:none;border-radius:0 0 5px 5px"></div>
<div class="a" style="left:200px;top:80px;width:218px;height:1px;background:#e6e6e6"></div>
<div class="a" style="left:200px;top:84px;width:218px;height:30px;background:#388ddf"></div>
<svg class="ic" style="left:225.9px;top:53.9px;" width="12.9" height="12.9" viewBox="0 0 16 16"><circle cx="8" cy="8" r="8" fill="#222"/><circle cx="8" cy="3.2" r="1.2" fill="#fff"/><circle cx="4.3" cy="4.8" r="1.2" fill="#fff"/><circle cx="3" cy="8.6" r="1.2" fill="#fff"/><circle cx="13" cy="8.6" r="1.2" fill="#fff"/><path d="M7,12.5 L11.2,4.2 L12.2,4.7 L9.3,13.2Z" fill="#fff"/><circle cx="8.2" cy="12.4" r="1.7" fill="#fff"/></svg>
<div class="t" style="left:241.66px;top:54.00px;font-size:13px;color:#222;font-weight:bold;letter-spacing:-0.521px;">Dashboard</div>
<svg class="ic" style="left:225.6px;top:90.6px;" width="15.4" height="15.4" viewBox="0 0 16 16"><circle cx="8" cy="8" r="8" fill="#fff"/><circle cx="8" cy="6.3" r="2.7" fill="#388ddf"/><path d="M3.6,12.8 Q4.5,10 8,10 Q11.5,10 12.4,12.8 Q10.5,14.5 8,14.5 Q5.5,14.5 3.6,12.8Z" fill="#388ddf"/></svg>
<div class="t" style="left:244.10px;top:91.90px;font-size:13px;color:#fff;letter-spacing:0.209px;">Accounts</div>
<svg class="ic" style="left:408px;top:95.3px;" width="4.8" height="9" viewBox="0 0 5 9"><path d="M0,0 L5,4.5 L0,9Z" fill="#fff"/></svg>
<svg class="ic" style="left:226px;top:122.6px;" width="12.6" height="11" viewBox="0 0 16 13"><path fill="#333" d="M2,0 H14 Q15,0 15,1 V2 H2 Q1,2 1,2.8 Q1,3.5 2,3.5 H15 Q16,3.5 16,4.5 V12 Q16,13 15,13 H2 Q0,13 0,11 V2 Q0,0 2,0Z"/><circle cx="13" cy="8.3" r="1" fill="#fff"/></svg>
<div class="t" style="left:242.11px;top:122.60px;font-size:13px;color:#333;letter-spacing:-0.167px;">Opening Balance</div>
<svg class="ic" style="left:226px;top:151.6px;" width="9.8" height="13.5" viewBox="0 0 11 17"><path fill="#333" d="M1,0 H7 V5 H11 V16 Q11,17 10,17 H1 Q0,17 0,16 V1 Q0,0 1,0Z M8,0 L11,3.5 V4 H8Z"/><text x="5.6" y="15.3" font-size="9.5" font-weight="bold" text-anchor="middle" fill="#fff" font-family="Liberation Sans">$</text><rect x="1.8" y="2" width="3.5" height="1" fill="#fff"/><rect x="1.8" y="4" width="3.5" height="1" fill="#fff"/></svg>
<div class="t" style="left:239.14px;top:153.10px;font-size:13px;color:#333;letter-spacing:-0.030px;">Tax Policies</div>
<svg class="ic" style="left:226px;top:182.1px;" width="15.9" height="13.5" viewBox="0 0 19.1 15.2"><path fill-rule="evenodd" fill="#333" d="M3.86,1.48 L4.11,0.08 L5.89,0.08 L6.14,1.48 L7.48,2.25 L8.82,1.77 L9.70,3.31 L8.62,4.23 L8.62,5.77 L9.70,6.69 L8.82,8.23 L7.48,7.75 L6.14,8.52 L5.89,9.92 L4.11,9.92 L3.86,8.52 L2.52,7.75 L1.18,8.23 L0.30,6.69 L1.38,5.77 L1.38,4.23 L0.30,3.31 L1.18,1.77 L2.52,2.25ZM6.30,5.00 A1.3,1.3 0 1,0 3.70,5.00 A1.3,1.3 0 1,0 6.30,5.00ZM14.50,6.37 L15.41,5.26 L17.00,6.13 L16.56,7.49 L17.39,8.84 L18.80,9.08 L18.84,10.88 L17.44,11.19 L16.68,12.58 L17.18,13.92 L15.64,14.86 L14.68,13.80 L13.10,13.83 L12.19,14.94 L10.60,14.07 L11.04,12.71 L10.21,11.36 L8.80,11.12 L8.76,9.32 L10.16,9.01 L10.92,7.62 L10.42,6.28 L11.96,5.34 L12.92,6.40ZM15.10,10.10 A1.3,1.3 0 1,0 12.50,10.10 A1.3,1.3 0 1,0 15.10,10.10Z"/></svg>
<div class="t" style="left:244.85px;top:183.60px;font-size:13px;color:#333;letter-spacing:-0.190px;">General Setup</div>
<svg class="ic" style="left:226px;top:212.6px;" width="10.6" height="13.5" viewBox="0 0 12 16"><rect x="2.5" y="0" width="2" height="3" rx="0.5" fill="#333"/><rect x="7.5" y="0" width="2" height="3" rx="0.5" fill="#333"/><path fill="#333" d="M1,2 H11 Q12,2 12,3 V5 H0 V3 Q0,2 1,2Z M0,6 H12 V15 Q12,16 11,16 H1 Q0,16 0,15Z"/></svg>
<div class="t" style="left:239.76px;top:214.10px;font-size:13px;color:#333;letter-spacing:0.039px;">Fiscal Years</div>
<svg class="ic" style="left:226px;top:242.79999999999998px;" width="8.2" height="14.5" viewBox="0 0 9.5 16"><path fill="none" stroke="#333" stroke-width="2.0" d="M8,3.6 Q7.2,2.6 4.7,2.6 Q1.5,2.6 1.5,5 Q1.5,6.8 4.7,7.6 Q8.3,8.4 8.3,10.6 Q8.3,13.1 4.9,13.1 Q2.3,13.1 1.2,12"/><rect x="3.85" y="0" width="1.80" height="16" fill="#333"/></svg>
<div class="t" style="left:236.94px;top:244.60px;font-size:13px;color:#333;letter-spacing:-0.105px;">Tax Slabs</div>
<svg class="ic" style="left:225.8px;top:273.70000000000005px;" width="13.5" height="13.5" viewBox="0 0 14 14"><ellipse cx="8.8" cy="4.4" rx="4.9" ry="2.1" fill="#333" stroke="#fff" stroke-width="0.8"/><ellipse cx="8.8" cy="1.9" rx="4.9" ry="2.1" fill="#333" stroke="#fff" stroke-width="0.8"/><ellipse cx="5.3" cy="11.2" rx="5.3" ry="2.1" fill="#333" stroke="#fff" stroke-width="0.8"/><ellipse cx="5.3" cy="8.8" rx="5.3" ry="2.1" fill="#333" stroke="#fff" stroke-width="0.8"/><ellipse cx="5.3" cy="6.4" rx="5.3" ry="2.1" fill="#333" stroke="#fff" stroke-width="0.8"/></svg>
<div class="t" style="left:242.05px;top:275.10px;font-size:13px;color:#333;letter-spacing:-0.083px;">Currencies</div>
<svg class="ic" style="left:225.6px;top:305.3px;" width="13.4" height="13.1" viewBox="0 0 16 15.2"><rect x="0.2" y="2.75" width="10.6" height="1.9" fill="#333"/><path fill="#333" d="M10.1,0 L15.9,3.7 L10.1,7.5Z"/><path fill="#333" d="M5.8,7.7 L0,11.4 L5.8,15.2Z"/><rect x="5.2" y="10.45" width="10.7" height="1.9" fill="#333"/></svg>
<div class="t" style="left:242.15px;top:305.60px;font-size:13px;color:#333;letter-spacing:-0.132px;">Currency Values</div>
<svg class="ic" style="left:226px;top:334.6px;" width="9.5" height="13" viewBox="0 0 12 17"><path fill="#333" d="M1,0 H8 V5 H12 V16 Q12,17 11,17 H1 Q0,17 0,16 V1 Q0,0 1,0Z M9,0 L12,3.5 V4 H9Z"/><rect x="2.5" y="8" width="7" height="1.3" fill="#fff"/><rect x="2.5" y="10.5" width="7" height="1.3" fill="#fff"/><rect x="2.5" y="13" width="7" height="1.3" fill="#fff"/></svg>
<div class="t" style="left:238.26px;top:336.10px;font-size:13px;color:#333;letter-spacing:-0.070px;">Finance Logs</div>
<svg class="ic" style="left:226px;top:365.1px;" width="16" height="13.5" viewBox="0 0 19.1 15.2"><path fill-rule="evenodd" fill="#333" d="M3.86,1.48 L4.11,0.08 L5.89,0.08 L6.14,1.48 L7.48,2.25 L8.82,1.77 L9.70,3.31 L8.62,4.23 L8.62,5.77 L9.70,6.69 L8.82,8.23 L7.48,7.75 L6.14,8.52 L5.89,9.92 L4.11,9.92 L3.86,8.52 L2.52,7.75 L1.18,8.23 L0.30,6.69 L1.38,5.77 L1.38,4.23 L0.30,3.31 L1.18,1.77 L2.52,2.25ZM6.30,5.00 A1.3,1.3 0 1,0 3.70,5.00 A1.3,1.3 0 1,0 6.30,5.00ZM14.50,6.37 L15.41,5.26 L17.00,6.13 L16.56,7.49 L17.39,8.84 L18.80,9.08 L18.84,10.88 L17.44,11.19 L16.68,12.58 L17.18,13.92 L15.64,14.86 L14.68,13.80 L13.10,13.83 L12.19,14.94 L10.60,14.07 L11.04,12.71 L10.21,11.36 L8.80,11.12 L8.76,9.32 L10.16,9.01 L10.92,7.62 L10.42,6.28 L11.96,5.34 L12.92,6.40ZM15.10,10.10 A1.3,1.3 0 1,0 12.50,10.10 A1.3,1.3 0 1,0 15.10,10.10Z"/></svg>
<div class="t" style="left:245.11px;top:366.60px;font-size:13px;color:#333;letter-spacing:0.049px;">Settings</div>
<svg class="ic" style="left:225.8px;top:396.1px;" width="11.4" height="13.5" viewBox="0 0 11.4 13.5"><circle cx="5.7" cy="3.6" r="3.6" fill="#333"/><path fill="#333" d="M0,13.5 V12 Q0,8.2 4,8.2 H7.4 Q11.4,8.2 11.4,12 V13.5Z"/><path fill="none" stroke="#fff" stroke-width="0.9" d="M3.8,8.4 L5.7,10.6 L7.6,8.4"/><path fill="#fff" d="M5.2,11.3 H6.2 L6.6,13.5 H4.8Z" opacity="0.6"/></svg>
<div class="t" style="left:240.54px;top:397.10px;font-size:13px;color:#333;letter-spacing:0.107px;">Teams</div>
<svg class="ic" style="left:226px;top:427.6px;" width="14.5" height="11.5" viewBox="0 0 15 13"><rect x="0" y="0" width="15" height="13" rx="1.8" fill="#333"/><rect x="2" y="2.5" width="2.2" height="1.8" fill="#fff"/><rect x="5.5" y="2.5" width="7.5" height="1.8" fill="#fff"/><rect x="2" y="5.6" width="2.2" height="1.8" fill="#fff"/><rect x="5.5" y="5.6" width="7.5" height="1.8" fill="#fff"/><rect x="2" y="8.7" width="2.2" height="1.8" fill="#fff"/><rect x="5.5" y="8.7" width="7.5" height="1.8" fill="#fff"/></svg>
<div class="t" style="left:243.63px;top:427.60px;font-size:13px;color:#333;letter-spacing:0.104px;">Workflow</div>
<svg class="ic" style="left:226px;top:457.6px;" width="16" height="12" viewBox="0 0 16 13.5"><path fill="none" stroke="#333" stroke-width="1.6" d="M4.5,1 H15 V10 H9"/><circle cx="3.5" cy="6" r="2.6" fill="#333"/><path fill="#333" d="M0,13.5 Q0,9.5 3.5,9.5 L10,9.5 L10,11.3 L7,11.3 L7,13.5Z"/></svg>
<div class="t" style="left:245.44px;top:458.10px;font-size:13px;color:#333;letter-spacing:0.117px;">Templates</div>
<div class="a" style="left:418px;top:84px;width:220px;height:234px;background:#fff;border:1px solid #3a8de0;border-top-width:2px"></div>
<div class="a" style="left:419px;top:124px;width:218px;height:1px;background:#e6e6e6"></div>
<div class="a" style="left:419px;top:281px;width:218px;height:30.5px;background:#388ddf"></div>
<svg class="ic" style="left:444.8px;top:98px;" width="12.9" height="12.9" viewBox="0 0 16 16"><circle cx="8" cy="8" r="8" fill="#222"/><circle cx="8" cy="3.2" r="1.2" fill="#fff"/><circle cx="4.3" cy="4.8" r="1.2" fill="#fff"/><circle cx="3" cy="8.6" r="1.2" fill="#fff"/><circle cx="13" cy="8.6" r="1.2" fill="#fff"/><path d="M7,12.5 L11.2,4.2 L12.2,4.7 L9.3,13.2Z" fill="#fff"/><circle cx="8.2" cy="12.4" r="1.7" fill="#fff"/></svg>
<div class="t" style="left:460.55px;top:99.00px;font-size:13px;color:#222;font-weight:bold;letter-spacing:-0.546px;">Dashboard</div>
<svg class="ic" style="left:444.8px;top:136.1px;" width="14.8" height="11" viewBox="0 0 16 12"><rect x="0" y="0" width="16" height="12" rx="1.8" fill="#333"/><rect x="0" y="2.8" width="16" height="2.2" fill="#fff"/><rect x="2" y="8" width="3" height="1.4" fill="#fff" opacity="0.6"/><rect x="6" y="8" width="3" height="1.4" fill="#fff" opacity="0.6"/></svg>
<div class="t" style="left:461.96px;top:135.60px;font-size:13px;color:#333;letter-spacing:0.125px;">Bank Accounts</div>
<svg class="ic" style="left:445px;top:167.3px;" width="14.1" height="11" viewBox="0 0 14 11"><path fill="#333" d="M0,1.6 Q3.5,0.2 7,1.1 Q10.5,2 14,0.5 V9.4 Q10.5,10.8 7,9.9 Q3.5,9 0,10.5Z"/><ellipse cx="7" cy="5.5" rx="2.2" ry="2.7" fill="#fff"/><circle cx="2.1" cy="3" r="0.85" fill="#fff"/><circle cx="2.1" cy="8.2" r="0.85" fill="#fff"/><circle cx="11.9" cy="2.6" r="0.85" fill="#fff"/><circle cx="11.9" cy="7.8" r="0.85" fill="#fff"/></svg>
<div class="t" style="left:462.35px;top:166.40px;font-size:13px;color:#333;letter-spacing:0.083px;">Cash Accounts</div>
<svg class="ic" style="left:445px;top:197.6px;" width="12.6" height="11.4" viewBox="0 0 13 12"><rect x="0" y="0" width="13" height="12" rx="1.5" fill="#333"/><rect x="1.8" y="3.3" width="2.4" height="1.5" fill="#fff"/><rect x="5.4" y="3.3" width="6" height="1.5" fill="#fff"/><rect x="1.8" y="6" width="2.4" height="1.5" fill="#fff"/><rect x="5.4" y="6" width="6" height="1.5" fill="#fff"/><rect x="1.8" y="8.7" width="2.4" height="1.5" fill="#fff"/><rect x="5.4" y="8.7" width="6" height="1.5" fill="#fff"/></svg>
<div class="t" style="left:461.40px;top:197.00px;font-size:13px;color:#333;letter-spacing:0.089px;">Account List</div>
<svg class="ic" style="left:445px;top:228.5px;" width="12.6" height="11" viewBox="0 0 13 11"><path fill="#333" d="M1,0 H5 L6.5,1.8 H12 Q13,1.8 13,2.8 V10 Q13,11 12,11 H1 Q0,11 0,10 V1 Q0,0 1,0Z"/></svg>
<div class="t" style="left:461.40px;top:227.70px;font-size:13px;color:#333;letter-spacing:-0.043px;">Account Groups</div>
<svg class="ic" style="left:445px;top:257.7px;" width="16" height="12" viewBox="0 0 16 12"><circle cx="8" cy="3.6" r="2.8" fill="#333"/><path fill="#333" d="M3.5,12 Q3.5,7.3 8,7.3 Q12.5,7.3 12.5,12Z"/><circle cx="2.7" cy="3.5" r="1.9" fill="#333"/><circle cx="13.3" cy="3.5" r="1.9" fill="#333"/><path fill="#333" d="M0,8.8 Q0,6.3 2.5,6.3 Q3.6,6.3 4.3,7 Q3,8 2.8,9Z"/><path fill="#333" d="M16,8.8 Q16,6.3 13.5,6.3 Q12.4,6.3 11.7,7 Q13,8 13.2,9Z"/></svg>
<div class="t" style="left:463.62px;top:257.70px;font-size:13px;color:#333;letter-spacing:0.104px;">User Accounts</div>
<svg class="ic" style="left:445px;top:288.3px;" width="9.7" height="13.5" viewBox="0 0 10 13.5"><rect x="0" y="0" width="10" height="13.5" rx="1" fill="#fff"/><path fill="#388ddf" d="M2.8,1.8 H7.2 L5,5.6Z M2.8,11.7 H7.2 L5,7.9Z M2.1,3.6 V9.9 L4.1,6.75Z M7.9,3.6 V9.9 L5.9,6.75Z"/></svg>
<div class="t" style="left:457.75px;top:288.80px;font-size:13px;color:#fff;letter-spacing:-0.095px;">Cost Centers</div>
</body></html>
